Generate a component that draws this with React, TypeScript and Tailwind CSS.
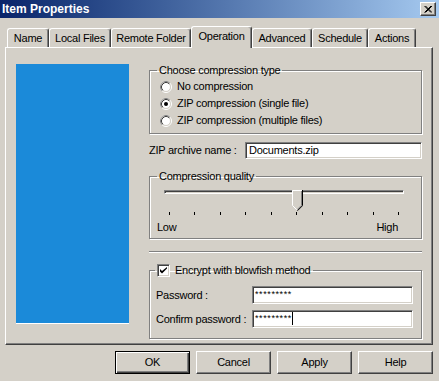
import React from 'react';

const raised = 'border border-t-white border-l-white border-r-[#404040] border-b-[#404040] shadow-[inset_-1px_-1px_0_#808080]';
const sunken = 'bg-white border border-t-[#808080] border-l-[#808080] border-r-white border-b-white shadow-[inset_1px_1px_0_#404040,inset_-1px_-1px_0_#d4d0c8]';
const etched = 'border border-[#808080] shadow-[inset_1px_1px_0_#fff,1px_1px_0_#fff]';

const Radio = ({ checked }: { checked?: boolean }) => (
  <svg width="12" height="12" viewBox="0 0 12 12" className="shrink-0">
    <circle cx="6" cy="6" r="5.5" fill="none" stroke="#fff" />
    <path d="M2.11 9.89 A5.5 5.5 0 0 1 9.89 2.11" fill="none" stroke="#808080" />
    <circle cx="6" cy="6" r="4.5" fill="#fff" stroke="#d4d0c8" />
    <path d="M2.82 9.18 A4.5 4.5 0 0 1 9.18 2.82" fill="none" stroke="#404040" />
    {checked && <circle cx="6" cy="6" r="2" fill="#000" />}
  </svg>
);

const Tab = ({ label, w, active }: { label: string; w: string; active?: boolean }) => (
  <div
    className={`${w} flex justify-center rounded-t-[3px] border-l border-t border-l-white border-t-white border-r border-r-[#404040] shadow-[inset_-1px_0_0_#808080] ${
      active ? 'h-[22px] pt-[3px] -mb-[1px] relative z-10 bg-[#d4d0c8]' : 'h-[19px] items-center'
    }`}
  >
    <span>{label}</span>
  </div>
);

const Button = ({ label, def }: { label: string; def?: boolean }) => (
  <div
    className={`w-[75px] h-[23px] flex items-center justify-center ${
      def
        ? 'border border-black shadow-[inset_1px_1px_0_#fff,inset_-1px_-1px_0_#404040,inset_-2px_-2px_0_#808080]'
        : raised
    }`}
  >
    {label}
  </div>
);

export default function App() {
  return (
    <div className="w-[439px] h-[381px] bg-[#d4d0c8] text-black text-[11px] leading-[13px] tracking-[-0.25px] font-['Liberation_Sans',Arial,sans-serif] flex flex-col overflow-hidden">
      {/* title bar */}
      <div className="h-[18px] bg-gradient-to-r from-[#0a246a] to-[#a6caf0] flex items-center justify-between pl-[2px] pr-[3px]">
        <span className="text-white font-bold text-[12px] tracking-normal">Item Properties</span>
        <div className={`w-[16px] h-[14px] bg-[#d4d0c8] flex items-center justify-center ${raised}`}>
          <svg width="8" height="7" viewBox="0 0 8 7">
            <path d="M0.5 0 L7 6.5 M1.5 0 L8 6.5 M0.5 6.5 L7 0 M1.5 6.5 L8 0" stroke="#000" strokeWidth="1" fill="none" />
          </svg>
        </div>
      </div>

      {/* tabs */}
      <div className="mt-[8px] h-[21px] pl-[7px] flex items-end">
        <Tab label="Name" w="w-[42px]" />
        <Tab label="Local Files" w="w-[62px]" />
        <Tab label="Remote Folder" w="w-[80px]" />
        <Tab label="Operation" w="w-[61px]" active />
        <Tab label="Advanced" w="w-[60px]" />
        <Tab label="Schedule" w="w-[56px]" />
        <Tab label="Actions" w="w-[48px]" />
      </div>

      {/* panel */}
      <div className="ml-[5px] w-[428px] h-[298px] border border-t-white border-l-white border-r-[#404040] border-b-[#404040] shadow-[inset_-1px_-1px_0_#808080] flex pt-[16px] pl-[10px]">
        <div className="w-[113px] h-[260px] bg-[#1b8ad9] border-b border-b-white shrink-0" />

        <div className="ml-[20px] w-[273px] flex flex-col">
          {/* compression type */}
          <fieldset className={`${etched} pl-[7px] pb-[4px]`}>
            <legend className="px-[2px]">Choose compression type</legend>
            <div className="mt-[1px] flex flex-col">
              {[
                ['No compression', false],
                ['ZIP compression (single file)', true],
                ['ZIP compression (multiple files)', false],
              ].map(([t, c]) => (
                <div key={t as string} className="h-[17px] flex items-center pl-[3px] gap-[5px]">
                  <Radio checked={c as boolean} />
                  <span>{t as string}</span>
                </div>
              ))}
            </div>
          </fieldset>

          {/* archive name */}
          <div className="mt-[8px] h-[17px] flex items-center">
            <span className="w-[96px]">ZIP archive name :</span>
            <div className={`${sunken} w-[177px] h-[17px] flex items-center pl-[3px]`}>Documents.zip</div>
          </div>

          {/* quality */}
          <fieldset className={`${etched} mt-[11px] pl-[7px] pb-[4px]`}>
            <legend className="px-[2px]">Compression quality</legend>
            <div className="relative ml-[7px] mt-[7px] w-[240px] h-[21px]">
              <div className="mt-[6px] h-[4px] border border-t-[#808080] border-l-[#808080] border-r-white border-b-white shadow-[inset_1px_1px_0_#404040]" />
              <svg width="11" height="21" viewBox="0 0 11 21" className="absolute left-[128px] top-0">
                <polygon points="0,0 11,0 11,15.5 5.5,21 0,15.5" fill="#d4d0c8" />
                <polyline points="0.5,15.5 0.5,0.5 10,0.5" fill="none" stroke="#fff" />
                <polyline points="0.5,15.5 5,20" fill="none" stroke="#fff" />
                <polyline points="10.5,0 10.5,15.7 5.5,20.7" fill="none" stroke="#000" />
                <polyline points="9.5,1 9.5,15.3 5.3,19.5" fill="none" stroke="#808080" />
              </svg>
            </div>
            <div className="ml-[12px] mt-[1px] w-[230px] h-[3px] flex justify-between">
              {Array.from({ length: 10 }).map((_, i) => (
                <div key={i} className="w-[1px] h-[3px] bg-black" />
              ))}
            </div>
            <div className="mt-[6px] w-[241px] flex justify-between">
              <span>Low</span>
              <span>High</span>
            </div>
          </fieldset>

          <div className="mt-[12px] border-t border-t-[#808080] border-b border-b-white" />

          {/* encryption */}
          <fieldset className={`${etched} mt-[11px] pl-[5px] pb-[10px]`}>
            <legend className="pl-[2px] pr-[3px] flex items-center gap-[5px]">
              <div className={`${sunken} w-[13px] h-[13px] flex items-center justify-center`}>
                <svg width="7" height="7" viewBox="0 0 7 7">
                  <path d="M0 2 L0 4.5 L2 6.5 L7 1.5 L7 0 L2 4 Z" fill="#000" />
                </svg>
              </div>
              <span>Encrypt with blowfish method</span>
            </legend>
            <div className="mt-[9px] h-[18px] flex items-center ml-[1px]">
              <span className="w-[96px]">Password :</span>
              <div className={`${sunken} w-[161px] h-[18px] flex items-start pl-[2px] pt-[2px] text-[9px] leading-[10px] tracking-[0.6px]`}>*********</div>
            </div>
            <div className="mt-[6px] h-[18px] flex items-center ml-[1px]">
              <span className="w-[96px]">Confirm password :</span>
              <div className={`${sunken} w-[161px] h-[18px] flex items-start pl-[2px] pt-[2px] text-[9px] leading-[10px] tracking-[0.6px]`}>
                <span>*********</span>
                <span className="-mt-[1px] w-[1px] h-[13px] bg-black" />
              </div>
            </div>
          </fieldset>
        </div>
      </div>

      {/* buttons */}
      <div className="mt-[6px] flex justify-end gap-[6px] pr-[6px]">
        <Button label="OK" def />
        <Button label="Cancel" />
        <Button label="Apply" />
        <Button label="Help" />
      </div>
    </div>
  );
}
